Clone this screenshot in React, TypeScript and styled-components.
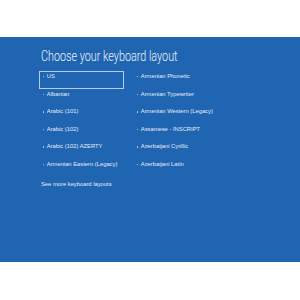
import React from "react";
import styled, { createGlobalStyle } from "styled-components";

const GlobalStyle = createGlobalStyle`
  html, body {
    margin: 0;
    padding: 0;
    background: #ffffff;
  }
`;

const leftLayouts = [
  "US",
  "Albanian",
  "Arabic (101)",
  "Arabic (102)",
  "Arabic (102) AZERTY",
  "Armenian Eastern (Legacy)",
];

const rightLayouts = [
  "Armenian Phonetic",
  "Armenian Typewriter",
  "Armenian Western (Legacy)",
  "Assamese - INSCRIPT",
  "Azerbaijani Cyrillic",
  "Azerbaijani Latin",
];

const App = () => {
  return (
    <>
      <GlobalStyle />
      <Page>
        <Screen>
          <Title>Choose your keyboard layout</Title>
          <Columns>
            <Column>
              {leftLayouts.map((name, i) => (
                <Item key={name} selected={i === 0}>
                  <Bullet />
                  {name}
                </Item>
              ))}
              <MoreLink>See more keyboard layouts</MoreLink>
            </Column>
            <Column>
              {rightLayouts.map((name) => (
                <Item key={name}>
                  <Bullet />
                  {name}
                </Item>
              ))}
            </Column>
          </Columns>
        </Screen>
      </Page>
    </>
  );
};

export default App;

const Page = styled.div`
  width: 300px;
  height: 300px;
  padding-top: 37px;
  box-sizing: border-box;
  background: #ffffff;
`;

const Screen = styled.div`
  height: 225px;
  background: #1f65b2;
  padding: 12px 0 0 39px;
  box-sizing: border-box;
  color: #ffffff;
`;

const Title = styled.h1`
  margin: 0 0 7px 2px;
  font-family: Roboto, "Liberation Sans", sans-serif;
  font-weight: 300;
  font-size: 15px;
  line-height: 15px;
  color: #eef3fa;
  white-space: nowrap;
  transform: scaleX(0.72);
  transform-origin: left center;
`;

const Columns = styled.div`
  display: grid;
  grid-template-columns: 85px 120px;
  column-gap: 9px;
`;

const Column = styled.div`
  display: flex;
  flex-direction: column;
`;

const Item = styled.div<{ selected?: boolean }>`
  height: 17.6px;
  box-sizing: border-box;
  display: flex;
  align-items: flex-start;
  padding: 1px 3px 0 3px;
  border: 1px solid ${(p) => (p.selected ? "#b5cbe8" : "transparent")};
  font-family: "Liberation Sans", Arial, sans-serif;
  font-size: 5.8px;
  line-height: 7px;
  color: #e6edf7;
  white-space: nowrap;
`;

const Bullet = styled.span`
  flex: none;
  width: 1.4px;
  height: 1.4px;
  margin: 3px 2.4px 0 0;
  border-radius: 50%;
  background: #c9d9ee;
`;

const MoreLink = styled.div`
  margin: 2px 0 0 2px;
  padding-top: 2px;
  font-family: "Liberation Sans", Arial, sans-serif;
  font-size: 5.8px;
  line-height: 7px;
  color: #e6edf7;
  white-space: nowrap;
`;
